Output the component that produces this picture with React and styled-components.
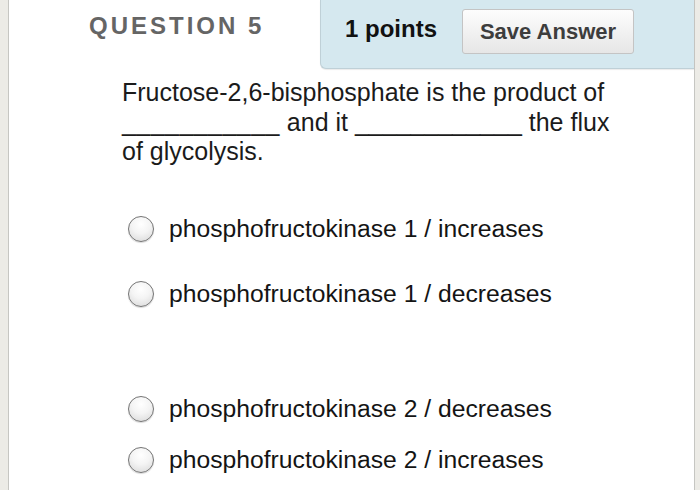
import React from "react";
import styled, { createGlobalStyle } from "styled-components";

const Global = createGlobalStyle`
  html, body { margin: 0; padding: 0; background: #ecebe6; }
  body { font-family: "Liberation Sans", Arial, sans-serif; }
`;

const Frame = styled.div`
  width: 700px;
  height: 490px;
  display: flex;
  background: #ecebe6;
  overflow: hidden;
`;

const Sheet = styled.div`
  margin-left: 8px;
  width: 685px;
  height: 490px;
  background: #ffffff;
  border-left: 1px solid #c6c6c2;
  border-right: 1px solid #c6c6c2;
  display: flex;
  flex-direction: column;
`;

const Header = styled.div`
  display: flex;
  align-items: flex-start;
  height: 69px;
`;

const Title = styled.div`
  width: 231px;
  padding-left: 80px;
  padding-top: 14px;
  font-size: 24px;
  font-weight: 700;
  letter-spacing: 3px;
  color: #656565;
  line-height: 24px;
`;

const Panel = styled.div`
  flex: 1;
  height: 69px;
  background: #d5e8ef;
  border-left: 1px solid #bfd0d7;
  border-bottom: 1px solid #bfd0d7;
  border-bottom-left-radius: 6px;
  box-shadow: 0 1px 1px rgba(0, 0, 0, 0.08);
  display: flex;
  align-items: flex-start;
  padding-left: 24px;
  padding-top: 9px;
  box-sizing: border-box;
`;

const Points = styled.div`
  font-size: 24px;
  font-weight: 700;
  color: #111;
  margin-right: 25px;
  line-height: 24px;
  margin-top: 8px;
`;

const SaveButton = styled.button`
  width: 172px;
  height: 45px;
  border: 1px solid #c4c4c4;
  border-radius: 3px;
  background: linear-gradient(#fdfdfd, #e6e6e6);
  font-family: "Liberation Sans", Arial, sans-serif;
  font-size: 22px;
  font-weight: 700;
  color: #3d3d3d;
  padding: 0;
`;

const Question = styled.p`
  margin: 9px 0 0 113px;
  font-size: 25px;
  line-height: 29.5px;
  color: #1b1b1b;
`;

const Blank = styled.span`
  letter-spacing: ${(p) => p.$spacing || 0}px;
`;

const Options = styled.div`
  display: flex;
  flex-direction: column;
  margin-left: 119px;
`;

const Option = styled.label`
  display: flex;
  align-items: center;
  height: 40px;
  margin-top: ${(p) => p.$gap}px;
  font-size: 24.7px;
  color: #141414;
`;

const Radio = styled.span`
  width: 24px;
  height: 24px;
  border-radius: 50%;
  border: 1.5px solid #747474;
  background: radial-gradient(circle at 50% 30%, #ffffff 0%, #f4f4f4 45%, #d6d6d6 100%);
  box-shadow: 0 1px 1px rgba(0, 0, 0, 0.15);
  margin-right: 15px;
  flex: none;
`;

const options = [
  { text: "phosphofructokinase 1 / increases", gap: 42 },
  { text: "phosphofructokinase 1 / decreases", gap: 25 },
  { text: "phosphofructokinase 2 / decreases", gap: 75 },
  { text: "phosphofructokinase 2 / increases", gap: 11 },
];

export default function App() {
  return (
    <>
      <Global />
      <Frame>
        <Sheet>
          <Header>
            <Title>QUESTION 5</Title>
            <Panel>
              <Points>1 points</Points>
              <SaveButton>Save Answer</SaveButton>
            </Panel>
          </Header>
          <Question>
            Fructose-2,6-bisphosphate is the product of
            <br />
            <Blank $spacing={0.45}>___________</Blank> and it{" "}
            <Blank>____________</Blank> the flux
            <br />
            of glycolysis.
          </Question>
          <Options>
            {options.map((o) => (
              <Option key={o.text} $gap={o.gap}>
                <Radio />
                {o.text}
              </Option>
            ))}
          </Options>
        </Sheet>
      </Frame>
    </>
  );
}
